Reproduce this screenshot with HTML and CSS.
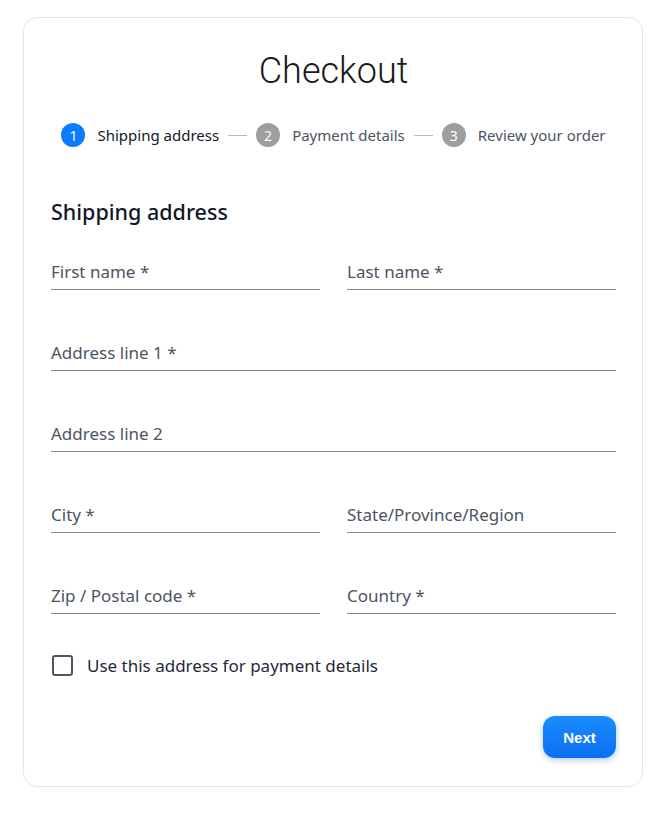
FILE: index.html
```html
<!DOCTYPE html>
<html lang="en">
<head>
<meta charset="utf-8">
<title>Checkout</title>
<link rel="stylesheet" href="styles.css">
</head>
<body>
<main class="card">
  <h1 class="title">Checkout</h1>
  <ol class="stepper">
    <li class="step active"><span class="dot">1</span><span class="step-label">Shipping address</span></li>
    <li class="sep"></li>
    <li class="step"><span class="dot">2</span><span class="step-label">Payment details</span></li>
    <li class="sep"></li>
    <li class="step"><span class="dot">3</span><span class="step-label">Review your order</span></li>
  </ol>
  <h2 class="section">Shipping address</h2>
  <form class="form">
    <div class="row two">
      <label class="field"><span class="label">First name *</span></label>
      <label class="field"><span class="label">Last name *</span></label>
    </div>
    <div class="row">
      <label class="field"><span class="label">Address line 1 *</span></label>
    </div>
    <div class="row">
      <label class="field"><span class="label">Address line 2</span></label>
    </div>
    <div class="row two">
      <label class="field"><span class="label">City *</span></label>
      <label class="field"><span class="label">State/Province/Region</span></label>
    </div>
    <div class="row two">
      <label class="field"><span class="label">Zip / Postal code *</span></label>
      <label class="field"><span class="label">Country *</span></label>
    </div>
    <label class="check"><span class="box"></span><span>Use this address for payment details</span></label>
    <div class="actions"><button type="button" class="next">Next</button></div>
  </form>
</main>
</body>
</html>
```
FILE: styles.css
```css
* { box-sizing: border-box; }
body {
  margin: 0;
  padding: 17px 23px;
  background: #fff;
  font-family: "Noto Sans", "Open Sans", sans-serif;
  color: #1f2937;
}
.card {
  width: 620px;
  height: 770px;
  border: 1px solid #e3e6ee;
  border-radius: 14px;
  padding: 30px 26px 0 27px;
}
.title {
  margin: 0;
  text-align: center;
  font-family: Roboto, sans-serif;
  font-weight: 300;
  font-size: 36px;
  line-height: 46px;
  color: #1a1a1a;
}
.stepper {
  list-style: none;
  margin: 28px 0 0 0;
  padding: 0;
  display: flex;
  justify-content: center;
  align-items: center;
  height: 26px;
}
.step { display: flex; align-items: center; }
.dot {
  width: 24px; height: 24px;
  border-radius: 50%;
  background: #9e9e9e;
  color: #fff;
  font-size: 14px;
  display: flex; align-items: center; justify-content: center;
}
.step.active .dot { background: #0a7cff; }
.step-label {
  margin-left: 12px;
  font-size: 15px;
  color: #4b5563;
}
.step.active .step-label { color: #111827; }
.sep {
  width: 19px;
  height: 1px;
  background: #b3bcc8;
  margin: 0 9px;
}
.section {
  margin: 50px 0 0 0;
  font-size: 21.5px;
  font-weight: 500;
  line-height: 28px;
  color: #111827;
}
.form { margin-top: 0; }
.row { display: flex; gap: 27px; height: 81px; }
.row:first-child { height: 64px; }
.field {
  flex: 1;
  display: flex;
  align-items: flex-end;
  border-bottom: 1px solid #8a8a8a;
  height: 64px;
  padding-bottom: 6px;
}
.row:not(:first-child) .field { margin-top: 17px; }
.label {
  font-size: 17px;
  line-height: 22px;
  color: #4b5563;
}
.check {
  display: flex;
  align-items: center;
  margin-top: 40px;
  font-size: 17px;
  color: #1f2937;
}
.box {
  width: 21px; height: 21px;
  border: 2px solid #4b5563;
  border-radius: 3px;
  margin-left: 1px;
  margin-right: 14px;
}
.actions {
  display: flex;
  justify-content: flex-end;
  margin-top: 39px;
}
.next {
  width: 73px;
  height: 42px;
  border: 0;
  border-radius: 12px;
  background: linear-gradient(#1a8cff, #0a6ff0);
  color: #fff;
  font-family: "Liberation Sans", Arial, sans-serif;
  font-weight: 700;
  font-size: 15px;
  box-shadow: 0 2px 6px rgba(10, 110, 240, 0.35);
}
```
